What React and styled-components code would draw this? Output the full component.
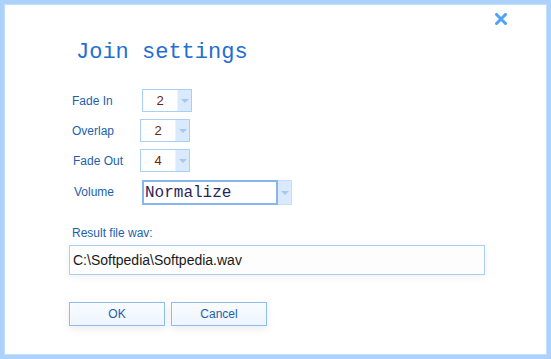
import React from "react";
import styled, { createGlobalStyle } from "styled-components";

const Global = createGlobalStyle`
  html, body {
    margin: 0;
    padding: 0;
    background: #ffffff;
  }
  * {
    box-sizing: border-box;
  }
`;

const Frame = styled.div`
  width: 551px;
  height: 359px;
  position: relative;
  border: 4px solid #acd2fb;
  box-shadow: inset 0 0 0 1px #c4dffc, 0 0 0 1px #9cc6f6 inset;
  background: #ffffff;
  padding: 36px 0 0 64px;
  font-family: "Liberation Sans", Arial, sans-serif;
`;

const Close = styled.div`
  position: absolute;
  top: 7px;
  right: 40px;
  width: 12px;
  height: 12px;
  cursor: pointer;
`;

const Title = styled.h1`
  margin: 0 0 23px 8px;
  font-family: "Liberation Mono", "Courier New", monospace;
  font-weight: normal;
  font-size: 22px;
  line-height: 26px;
  color: #1f6ed1;
`;

const Rows = styled.div`
  display: grid;
  grid-template-columns: 72px auto;
  row-gap: 7px;
  align-items: center;
  justify-items: start;
`;

const Label = styled.span`
  font-size: 12px;
  color: #1d5fae;
  padding-left: ${p => p.indent || 4}px;
`;

const Combo = styled.div`
  display: flex;
  width: 50px;
  height: 23px;
  border: 1px solid #a9cff7;
  margin-left: ${p => p.shift || 0}px;
`;

const Value = styled.div`
  flex: 1;
  display: flex;
  align-items: center;
  justify-content: center;
  font-size: 13px;
  color: #6b2410;
  background: #ffffff;
`;

const Arrow = styled.div`
  width: 14px;
  display: flex;
  align-items: center;
  justify-content: center;
  background: #d8eafc;
  border-left: 1px solid #e9f3fe;

  &::after {
    content: "";
    border-left: 4px solid transparent;
    border-right: 4px solid transparent;
    border-top: 4px solid #a6c8ee;
  }
`;

const VolumeCombo = styled.div`
  display: flex;
  width: 150px;
  height: 25px;
  margin: 1px 0 0 2px;
`;

const VolumeValue = styled.div`
  flex: 1;
  display: flex;
  align-items: center;
  padding-left: 1px;
  border: 2px solid #86b6ee;
  font-family: "Liberation Mono", "Courier New", monospace;
  font-size: 16px;
  color: #2b1f5c;
  background: #ffffff;
`;

const VolumeArrow = styled(Arrow)`
  border: 1px solid #c6def8;
  border-left: none;
`;

const FileLabel = styled.div`
  margin: 21px 0 5px 4px;
  font-size: 12px;
  color: #1d5fae;
`;

const FileInput = styled.div`
  width: 416px;
  height: 30px;
  margin-left: 1px;
  display: flex;
  align-items: center;
  padding-left: 3px;
  border: 1px solid #a9cff7;
  background: #fdfdfd;
  box-shadow: 0 2px 8px rgba(0, 0, 0, 0.06);
  font-size: 14px;
  color: #1a1a1a;
`;

const Buttons = styled.div`
  display: flex;
  gap: 6px;
  margin: 27px 0 0 1px;
`;

const Button = styled.button`
  width: 96px;
  height: 24px;
  border: 1px solid #8dbcf3;
  background: linear-gradient(#f8fcff, #eef5fc);
  box-shadow: 0 3px 8px rgba(0, 0, 0, 0.08);
  font-family: "Liberation Sans", Arial, sans-serif;
  font-size: 12px;
  color: #1d5fae;
  padding: 0;
  cursor: pointer;
`;

const App = () => {
  return (
    <Frame>
      <Global />
      <Close>
        <svg width="12" height="12" viewBox="0 0 12 12">
          <path d="M1.5 1.5 L10.5 10.5 M10.5 1.5 L1.5 10.5" stroke="#4fa2f5" strokeWidth="3" strokeLinecap="square" />
        </svg>
      </Close>
      <Title>Join settings</Title>
      <Rows>
        <Label>Fade In</Label>
        <Combo shift={2}>
          <Value>2</Value>
          <Arrow />
        </Combo>
        <Label>Overlap</Label>
        <Combo>
          <Value>2</Value>
          <Arrow />
        </Combo>
        <Label indent={5}>Fade Out</Label>
        <Combo>
          <Value>4</Value>
          <Arrow />
        </Combo>
        <Label indent={6}>Volume</Label>
        <VolumeCombo>
          <VolumeValue>Normalize</VolumeValue>
          <VolumeArrow />
        </VolumeCombo>
      </Rows>
      <FileLabel>Result file wav:</FileLabel>
      <FileInput>C:\Softpedia\Softpedia.wav</FileInput>
      <Buttons>
        <Button>OK</Button>
        <Button>Cancel</Button>
      </Buttons>
    </Frame>
  );
};

export default App;
